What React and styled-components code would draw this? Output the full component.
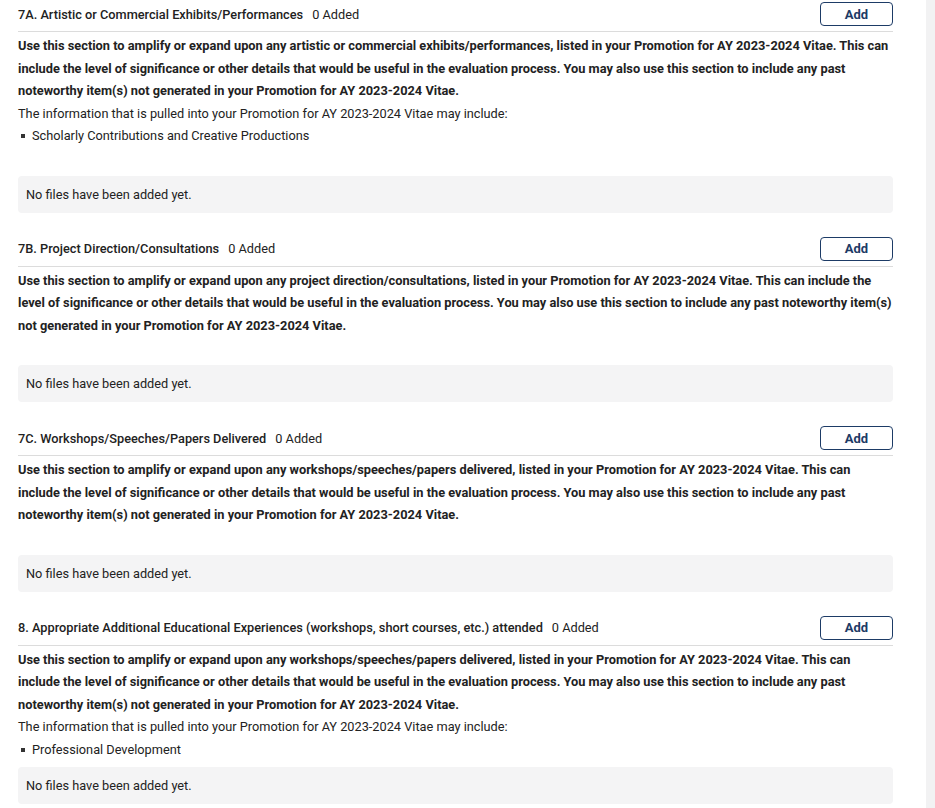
import styled, { createGlobalStyle } from "styled-components";

const GlobalStyle = createGlobalStyle`
  html, body {
    margin: 0;
    padding: 0;
    background: #f2f2f3;
  }
  body {
    font-family: Roboto, "Liberation Sans", Arial, sans-serif;
    color: #222;
  }
`;

const Page = styled.div`
  width: 926px;
  min-height: 808px;
  background: #fff;
  box-sizing: border-box;
  padding: 0 33px 0 18px;
`;

const Section = styled.section`
  padding-top: 2px;
  margin-bottom: 22px;
`;

const Header = styled.div`
  display: flex;
  align-items: center;
  justify-content: space-between;
  padding-bottom: 5px;
  border-bottom: 1px solid #dcdcdc;
`;

const Title = styled.div`
  font-size: 12.75px;
  font-weight: 500;
  color: #222;
`;

const Count = styled.span`
  font-weight: 400;
  margin-left: 9px;
`;

const AddButton = styled.button`
  width: 73px;
  height: 24px;
  box-sizing: border-box;
  border: 1.5px solid #1d3b66;
  border-radius: 4px;
  background: #fff;
  color: #1d3b66;
  font-family: inherit;
  font-size: 13px;
  font-weight: 700;
  cursor: pointer;
`;

const Body = styled.div`
  padding-top: 3px;
  font-size: 12.75px;
  line-height: 22.5px;
`;

const Lead = styled.p`
  margin: 0 -1.5px 0 0;
  font-size: 12.8px;
  font-weight: 700;
  color: #222;
`;

const Note = styled.p`
  margin: 0;
  color: #222;
`;

const List = styled.ul`
  margin: 0;
  padding: 0;
  list-style: none;
`;

const Item = styled.li`
  display: flex;
  align-items: center;

  &::before {
    content: "";
    width: 4px;
    height: 4px;
    background: #333;
    margin: 0 7px 0 3px;
  }
`;

const Empty = styled.div`
  margin-top: ${(p) => p.$gap}px;
  background: #f4f4f5;
  border-radius: 4px;
  height: 37px;
  display: flex;
  align-items: center;
  padding-left: 8px;
  font-size: 12.75px;
  color: #222;
`;

const sections = [
  {
    title: "7A. Artistic or Commercial Exhibits/Performances",
    lead:
      "Use this section to amplify or expand upon any artistic or commercial exhibits/performances, listed in your Promotion for AY 2023-2024 Vitae. This can include the level of significance or other details that would be useful in the evaluation process. You may also use this section to include any past noteworthy item(s) not generated in your Promotion for AY 2023-2024 Vitae.",
    items: ["Scholarly Contributions and Creative Productions"],
    gap: 28,
  },
  {
    title: "7B. Project Direction/Consultations",
    lead:
      "Use this section to amplify or expand upon any project direction/consultations, listed in your Promotion for AY 2023-2024 Vitae. This can include the level of significance or other details that would be useful in the evaluation process. You may also use this section to include any past noteworthy item(s) not generated in your Promotion for AY 2023-2024 Vitae.",
    gap: 28,
  },
  {
    title: "7C. Workshops/Speeches/Papers Delivered",
    lead:
      "Use this section to amplify or expand upon any workshops/speeches/papers delivered, listed in your Promotion for AY 2023-2024 Vitae. This can include the level of significance or other details that would be useful in the evaluation process. You may also use this section to include any past noteworthy item(s) not generated in your Promotion for AY 2023-2024 Vitae.",
    gap: 28,
  },
  {
    title:
      "8. Appropriate Additional Educational Experiences (workshops, short courses, etc.) attended",
    lead:
      "Use this section to amplify or expand upon any workshops/speeches/papers delivered, listed in your Promotion for AY 2023-2024 Vitae. This can include the level of significance or other details that would be useful in the evaluation process. You may also use this section to include any past noteworthy item(s) not generated in your Promotion for AY 2023-2024 Vitae.",
    items: ["Professional Development"],
    gap: 6,
  },
];

export default function App() {
  return (
    <>
      <GlobalStyle />
      <Page>
        {sections.map((s) => (
          <Section key={s.title}>
            <Header>
              <Title>
                {s.title}
                <Count>0 Added</Count>
              </Title>
              <AddButton>Add</AddButton>
            </Header>
            <Body>
              <Lead>{s.lead}</Lead>
              {s.items && (
                <>
                  <Note>
                    The information that is pulled into your Promotion for AY
                    2023-2024 Vitae may include:
                  </Note>
                  <List>
                    {s.items.map((it) => (
                      <Item key={it}>{it}</Item>
                    ))}
                  </List>
                </>
              )}
            </Body>
            <Empty $gap={s.gap}>No files have been added yet.</Empty>
          </Section>
        ))}
      </Page>
    </>
  );
}
